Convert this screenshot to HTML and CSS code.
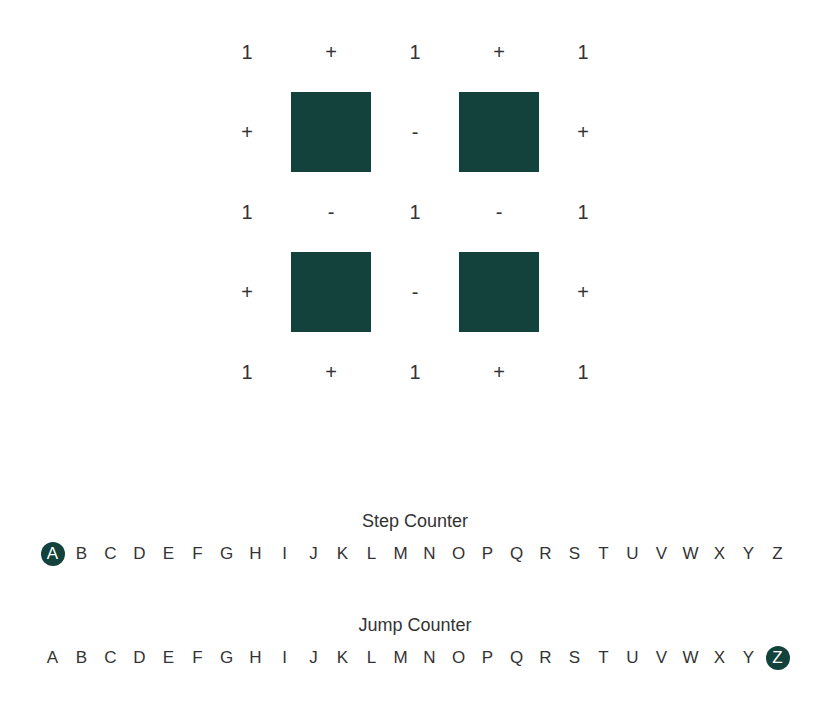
FILE: index.html
```html
<!DOCTYPE html>
<html lang="en">
<head>
    <meta charset="UTF-8">
    <meta name="viewport" content="width=device-width, initial-scale=1.0">
    <title>counters</title>
    <link rel="stylesheet" href="styles.css">
</head>
<body>
    <div class="board">
        <div class="cell">1</div>
        <div class="cell">+</div>
        <div class="cell">1</div>
        <div class="cell">+</div>
        <div class="cell">1</div>

        <div class="cell">+</div>
        <div class="cell block"></div>
        <div class="cell">-</div>
        <div class="cell block"></div>
        <div class="cell">+</div>

        <div class="cell">1</div>
        <div class="cell">-</div>
        <div class="cell">1</div>
        <div class="cell">-</div>
        <div class="cell">1</div>

        <div class="cell">+</div>
        <div class="cell block"></div>
        <div class="cell">-</div>
        <div class="cell block"></div>
        <div class="cell">+</div>

        <div class="cell">1</div>
        <div class="cell">+</div>
        <div class="cell">1</div>
        <div class="cell">+</div>
        <div class="cell">1</div>
    </div>

    <div class="counter step">
        <p class="title">Step Counter</p>
        <div class="letters" id="stepLetters"></div>
    </div>

    <div class="counter jump">
        <p class="title">Jump Counter</p>
        <div class="letters" id="jumpLetters"></div>
    </div>

    <script>
        const abc = 'ABCDEFGHIJKLMNOPQRSTUVWXYZ'.split('')

        const fillRow = (el, active) => {
            abc.forEach((ch) => {
                const span = document.createElement('span')
                span.className = ch == active ? 'letter active' : 'letter'
                span.textContent = ch
                el.appendChild(span)
            })
        }

        fillRow(document.getElementById('stepLetters'), 'A')
        fillRow(document.getElementById('jumpLetters'), 'Z')
    </script>
</body>
</html>
```

FILE: styles.css
```css
* {
    margin: 0;
    padding: 0;
    box-sizing: border-box;
}

body {
    font-family: "Liberation Sans", Arial, Helvetica, sans-serif;
    color: #333;
    padding-top: 12px;
}

.board {
    display: grid;
    grid-template-columns: repeat(5, 80px);
    grid-auto-rows: 80px;
    column-gap: 4px;
    justify-content: center;
}

.cell {
    display: flex;
    align-items: center;
    justify-content: center;
    font-size: 20px;
}

.block {
    background-color: #13413b;
}

.step {
    margin-top: 99px;
}

.jump {
    margin-top: 49px;
}

.title {
    text-align: center;
    font-size: 18px;
    line-height: 21px;
}

.letters {
    margin-top: 10px;
    display: flex;
    justify-content: center;
    gap: 5px;
}

.letter {
    width: 24px;
    height: 24px;
    border-radius: 50%;
    display: flex;
    align-items: center;
    justify-content: center;
    font-size: 17px;
}

.letter.active {
    background-color: #13413b;
    color: white;
}
```
